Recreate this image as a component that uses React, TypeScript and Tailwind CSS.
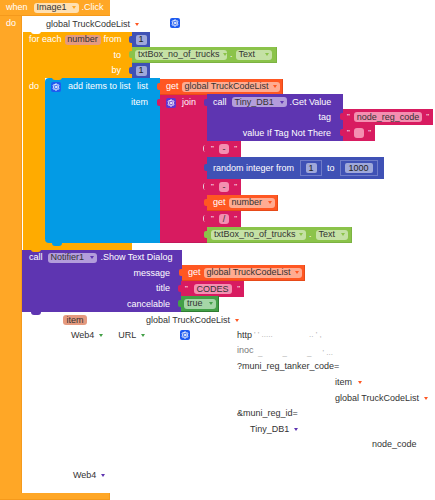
import React from 'react';
import { Settings } from 'lucide-react';

const Caret = ({ className = 'fill-[#ff5722]' }: { className?: string }) => (
  <svg width="4" height="3" viewBox="0 0 4 3" className={`shrink-0 ${className}`}>
    <polygon points="0,0 4,0 2,3" />
  </svg>
);

const Gear = ({ className = '' }: { className?: string }) => (
  <div className={`flex h-[10px] w-[10px] shrink-0 items-center justify-center rounded-[2px] bg-[#1e5bf0] ${className}`}>
    <Settings size={8} strokeWidth={3} color="#fff" />
  </div>
);

const Pill = ({ label, className, caret }: { label: string; className: string; caret?: string }) => (
  <span className={`flex h-[10px] shrink-0 items-center justify-between gap-[3px] rounded-[3px] px-[3px] text-[#333] ${className}`}>
    {label}
    {caret && <Caret className={caret} />}
  </span>
);

const Tab = ({ className }: { className: string }) => (
  <div className={`absolute -left-[3px] h-[7px] w-[4px] rounded-l-[2px] ${className}`} />
);

const StringBlock = ({ className, pill, children }: { className: string; pill: string; children?: React.ReactNode }) => (
  <div className={`absolute flex h-[16px] items-center justify-between bg-[#d81b60] px-[4px] text-white ${className}`}>
    <Tab className="top-[4px] bg-[#d81b60]" />
    <span className="text-[8px]">"</span>
    <span className={`flex h-[10px] min-w-[10px] items-center justify-center rounded-[3px] bg-[#f48fb1] px-[2px] text-[#333] ${pill}`}>
      {children}
    </span>
    <span className="text-[8px]">"</span>
  </div>
);

const SocketMark = ({ className }: { className: string }) => (
  <div className={`absolute h-[7px] w-[3px] rounded-l-[3px] border-l border-[#e3d0d8] ${className}`} />
);

export default function App() {
  return (
    <div className="relative h-[500px] w-[435px] overflow-hidden whitespace-nowrap bg-white font-['Liberation_Sans',Arial,sans-serif] text-[9px] leading-none text-[#333]">
      {/* when Image1.Click */}
      <div className="absolute left-0 top-0 h-[500px] w-[22px] border-r border-[#f59a1c] bg-[#ffa726]" />
      <div className="absolute left-0 top-0 flex h-[16px] w-[110px] items-center rounded-tl-[3px] border-b border-[#f59a1c] bg-[#ffa726] pl-[6px] text-white">
        <span>when</span>
        <Pill label="Image1" className="ml-[6px] w-[45px] bg-[#ffe0b2]" caret="fill-[#ffa726]" />
        <span className="ml-[3px]">.Click</span>
      </div>
      <span className="absolute left-[6px] top-[19px] text-white">do</span>
      <div className="absolute bottom-0 left-0 h-[7px] w-[110px] border-b border-r border-[#f59a1c] bg-[#ffa726]" />
      <div className="absolute left-[22px] top-[16px] h-[4px] w-[8px] rounded-tl-[5px] bg-white" />

      {/* global list */}
      <div className="absolute left-[46px] top-[20px] flex items-center gap-[5px]">
        <span>global TruckCodeList</span>
        <Caret />
      </div>
      <Gear className="absolute left-[170px] top-[18px]" />

      {/* for each */}
      <div className="absolute left-[23px] top-[32px] h-[218px] w-[22px] bg-[#ffab00]" />
      <div className="absolute left-[23px] top-[32px] flex h-[46px] w-[109px] flex-col items-end bg-[#ffab00] pr-[11px] text-white">
        <div className="absolute left-[8px] top-[-1px] h-[3px] w-[10px] rounded-b-[4px] bg-white" />
        <div className="flex h-[15px] items-center gap-[3px] self-start pl-[6px]">
          <span>for each</span>
          <span className="flex h-[10px] w-[36px] items-center justify-center rounded-[3px] bg-[#e59a7f] text-[#333]">number</span>
          <span>from</span>
        </div>
        <div className="flex h-[16px] items-center">to</div>
        <div className="flex h-[15px] items-center">by</div>
      </div>
      <span className="absolute left-[29px] top-[82px] text-white">do</span>
      <div className="absolute left-[23px] top-[240px] h-[10px] w-[109px] bg-[#ffab00]" />

      <div className="absolute left-[132px] top-[32px] flex h-[15px] w-[18px] items-center justify-center bg-[#3f51b5]">
        <Tab className="top-[4px] bg-[#3f51b5]" />
        <span className="flex h-[10px] w-[11px] items-center justify-center rounded-[2px] bg-[#9fa8da] text-[#222]">1</span>
      </div>
      <div className="absolute left-[132px] top-[47px] flex h-[16px] w-[145px] items-center border-b border-r border-[#7cb342] bg-[#8bc34a] px-[3px] text-[#333]">
        <Tab className="top-[4px] bg-[#8bc34a]" />
        <Pill label="txtBox_no_of_trucks" className="w-[92px] bg-[#c5e1a5]" caret="fill-[#8bc34a]" />
        <span className="ml-[3px] text-white">.</span>
        <Pill label="Text" className="ml-[3px] w-[36px] bg-[#c5e1a5]" caret="fill-[#8bc34a]" />
      </div>
      <div className="absolute left-[132px] top-[63px] flex h-[15px] w-[18px] items-center justify-center bg-[#3f51b5]">
        <Tab className="top-[4px] bg-[#3f51b5]" />
        <span className="flex h-[10px] w-[11px] items-center justify-center rounded-[2px] bg-[#9fa8da] text-[#222]">1</span>
      </div>

      {/* add items to list */}
      <div className="absolute left-[45px] top-[78px] flex h-[165px] w-[115px] flex-col rounded-tl-[4px] rounded-bl-[4px] bg-[#039be5] text-white">
        <div className="absolute left-[7px] top-[-1px] h-[3px] w-[10px] rounded-b-[4px] bg-[#ffab00]" />
        <div className="absolute bottom-[-3px] left-[7px] h-[3px] w-[10px] rounded-b-[4px] bg-[#039be5]" />
        <div className="flex h-[17px] items-center pl-[6px] pr-[12px]">
          <Gear />
          <span className="ml-[7px]">add items to list</span>
          <span className="ml-auto">list</span>
        </div>
        <div className="flex h-[15px] items-center justify-end pr-[12px]">item</div>
      </div>

      {/* get global */}
      <div className="absolute left-[160px] top-[79px] flex h-[16px] w-[123px] items-center border-b border-r border-[#e64a19] bg-[#ff5722] pl-[6px] text-white">
        <Tab className="top-[4px] bg-[#ff5722]" />
        <span>get</span>
        <Pill label="global TruckCodeList" className="ml-[3px] w-[98px] bg-[#ffab91]" caret="fill-[#ff5722]" />
      </div>

      {/* join */}
      <div className="absolute left-[160px] top-[95px] flex h-[147px] w-[47px] items-start bg-[#d81b60] text-white">
        <Tab className="top-[4px] bg-[#d81b60]" />
        <div className="flex h-[15px] items-center pl-[6px]">
          <Gear className="bg-[#5e35d1]" />
          <span className="ml-[6px]">join</span>
        </div>
      </div>

      {/* Tiny_DB1 Get Value */}
      <div className="absolute left-[207px] top-[94px] flex h-[47px] w-[136px] flex-col items-end bg-[#5e35b1] pr-[12px] text-white">
        <Tab className="top-[5px] bg-[#5e35b1]" />
        <div className="flex h-[16px] items-center self-start pl-[6px]">
          <span>call</span>
          <Pill label="Tiny_DB1" className="ml-[5px] w-[55px] bg-[#b39ddb]" caret="fill-[#5e35b1]" />
          <span className="ml-[3px]">.Get Value</span>
        </div>
        <div className="flex h-[15px] items-center">tag</div>
        <div className="flex h-[16px] items-center">value If Tag Not There</div>
      </div>
      <StringBlock className="left-[343px] top-[109px] w-[90px]" pill="w-[68px]">node_reg_code</StringBlock>
      <StringBlock className="left-[343px] top-[125px] w-[32px]" pill="w-[10px]" />

      <SocketMark className="left-[203px] top-[145px]" />
      <StringBlock className="left-[207px] top-[141px] w-[34px]" pill="w-[10px]">-</StringBlock>

      {/* random integer */}
      <div className="absolute left-[207px] top-[157px] flex h-[22px] w-[177px] items-center bg-[#3f51b5] pl-[6px] text-white">
        <Tab className="top-[7px] bg-[#3f51b5]" />
        <span>random integer from</span>
        <span className="ml-[6px] flex h-[16px] w-[22px] items-center justify-center border border-[#6f7cc9] bg-[#3f51b5]">
          <span className="flex h-[10px] w-[11px] items-center justify-center rounded-[2px] bg-[#9fa8da] text-[#222]">1</span>
        </span>
        <span className="ml-[5px]">to</span>
        <span className="ml-[5px] flex h-[16px] w-[38px] items-center justify-center border border-[#6f7cc9] bg-[#3f51b5]">
          <span className="flex h-[10px] w-[28px] items-center justify-center rounded-[2px] bg-[#9fa8da] text-[#222]">1000</span>
        </span>
      </div>

      <SocketMark className="left-[203px] top-[183px]" />
      <StringBlock className="left-[207px] top-[179px] w-[34px]" pill="w-[10px]">-</StringBlock>

      {/* get number */}
      <div className="absolute left-[207px] top-[195px] flex h-[16px] w-[71px] items-center border-b border-r border-[#e64a19] bg-[#ff5722] pl-[6px] text-white">
        <Tab className="top-[4px] bg-[#ff5722]" />
        <span>get</span>
        <Pill label="number" className="ml-[3px] w-[46px] bg-[#ffab91]" caret="fill-[#ff5722]" />
      </div>

      <SocketMark className="left-[203px] top-[215px]" />
      <StringBlock className="left-[207px] top-[211px] w-[34px]" pill="w-[10px]">/</StringBlock>

      {/* txtBox Text */}
      <div className="absolute left-[207px] top-[227px] flex h-[16px] w-[145px] items-center border-b border-r border-[#7cb342] bg-[#8bc34a] px-[4px] text-[#333]">
        <Tab className="top-[4px] bg-[#8bc34a]" />
        <Pill label="txtBox_no_of_trucks" className="w-[95px] bg-[#c5e1a5]" caret="fill-[#8bc34a]" />
        <span className="ml-[3px] text-white">.</span>
        <Pill label="Text" className="ml-[4px] w-[32px] bg-[#c5e1a5]" caret="fill-[#8bc34a]" />
      </div>
      <div className="absolute left-[160px] top-[242px] h-[1px] w-[47px] bg-[#c2185b]" />

      {/* Notifier */}
      <div className="absolute left-[22px] top-[250px] flex h-[62px] w-[160px] flex-col items-end bg-[#5e35b1] pr-[12px] text-white">
        <div className="absolute left-[9px] top-[-1px] h-[3px] w-[10px] rounded-b-[4px] bg-[#ffab00]" />
        <div className="absolute bottom-[-3px] left-[9px] h-[3px] w-[10px] rounded-b-[4px] bg-[#5e35b1]" />
        <div className="flex h-[15px] items-center self-start pl-[7px]">
          <span>call</span>
          <Pill label="Notifier1" className="ml-[5px] w-[49px] bg-[#b39ddb]" caret="fill-[#5e35b1]" />
          <span className="ml-[4px]">.Show Text Dialog</span>
        </div>
        <div className="flex h-[16px] items-center">message</div>
        <div className="flex h-[15px] items-center">title</div>
        <div className="flex h-[16px] items-center">cancelable</div>
      </div>
      <div className="absolute left-[182px] top-[265px] flex h-[16px] w-[123px] items-center border-b border-r border-[#e64a19] bg-[#ff5722] pl-[6px] text-white">
        <Tab className="top-[4px] bg-[#ff5722]" />
        <span>get</span>
        <Pill label="global TruckCodeList" className="ml-[3px] w-[98px] bg-[#ffab91]" caret="fill-[#ff5722]" />
      </div>
      <StringBlock className="left-[181px] top-[281px] w-[63px]" pill="w-[38px]">CODES</StringBlock>
      <div className="absolute left-[181px] top-[296px] flex h-[16px] w-[38px] items-center border-b border-r border-[#2e7d32] bg-[#43a047] pl-[3px]">
        <Tab className="top-[4px] bg-[#43a047]" />
        <Pill label="true" className="w-[32px] bg-[#a5d6a7]" caret="fill-[#43a047]" />
      </div>

      {/* leftovers of the redacted blocks: dark text on white */}
      <span className="absolute left-[63px] top-[315px] flex h-[10px] w-[24px] items-center justify-center rounded-[3px] bg-[#e59a7f]">item</span>
      <div className="absolute left-[146px] top-[316px] flex items-center gap-[5px]">
        <span>global TruckCodeList</span>
        <Caret />
      </div>
      <div className="absolute left-[71px] top-[331px] flex items-center gap-[5px]">
        <span>Web4</span>
        <Caret className="fill-[#43a047]" />
        <span className="ml-[10px]">URL</span>
        <Caret className="fill-[#43a047]" />
      </div>
      <Gear className="absolute left-[180px] top-[330px]" />
      <span className="absolute left-[237px] top-[331px]">http</span>
      <span className="absolute left-[254px] top-[331px] text-[8px] text-[#aaa]">' ' .....</span>
      <span className="absolute left-[309px] top-[331px] text-[8px] text-[#aaa]">.. ' ,</span>
      <span className="absolute left-[237px] top-[346px] text-[#777]">inoc</span>
      <span className="absolute left-[258px] top-[349px] text-[8px] text-[#aaa]">_ &nbsp; &nbsp; &nbsp; &nbsp; _ &nbsp; &nbsp; &nbsp; &nbsp; _ &nbsp; &nbsp; ' ...</span>
      <span className="absolute left-[237px] top-[362px]">?muni_reg_tanker_code=</span>
      <div className="absolute left-[335px] top-[378px] flex items-center gap-[6px]">
        <span>item</span>
        <Caret />
      </div>
      <div className="absolute left-[335px] top-[394px] flex items-center gap-[5px]">
        <span>global TruckCodeList</span>
        <Caret />
      </div>
      <span className="absolute left-[237px] top-[409px]">&amp;muni_reg_id=</span>
      <div className="absolute left-[250px] top-[425px] flex items-center gap-[5px]">
        <span>Tiny_DB1</span>
        <Caret className="fill-[#5e35b1]" />
      </div>
      <span className="absolute left-[372px] top-[440px]">node_code</span>
      <div className="absolute left-[73px] top-[471px] flex items-center gap-[5px]">
        <span>Web4</span>
        <Caret className="fill-[#5e35b1]" />
      </div>
    </div>
  );
}
